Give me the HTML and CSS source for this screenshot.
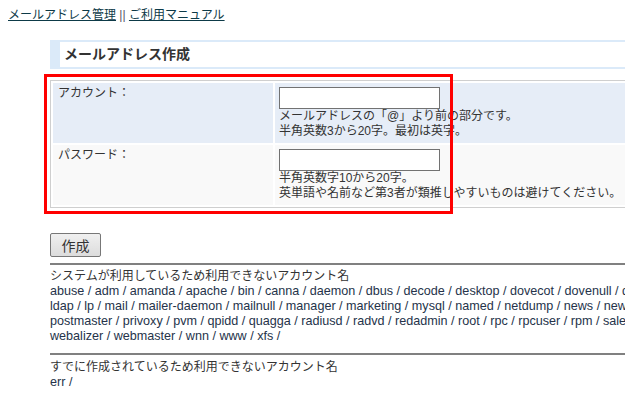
FILE: index.html
```html
<!DOCTYPE html>
<html lang="ja">
<head>
<meta charset="utf-8">
<title>メールアドレス作成</title>
<link rel="stylesheet" href="styles.css">
</head>
<body>
<div class="topnav"><a href="#">メールアドレス管理</a> <span class="sep">||</span> <a href="#">ご利用マニュアル</a></div>
<div class="main">
  <h2 class="title">メールアドレス作成</h2>
  <div class="formwrap">
    <table class="form">
      <tr class="row-a">
        <th>アカウント：</th>
        <td><input type="text" class="field"><div class="note">メールアドレスの「@」より前の部分です。<br>半角英数3から20字。最初は英字。</div></td>
      </tr>
      <tr class="row-b">
        <th>パスワード：</th>
        <td><input type="password" class="field"><div class="note">半角英数字10から20字。<br>英単語や名前など第3者が類推しやすいものは避けてください。</div></td>
      </tr>
    </table>
    <div class="highlight"></div>
  </div>
  <button class="submit" type="button">作成</button>
  <hr class="rule">
  <div class="block">
    <div>システムが利用しているため利用できないアカウント名</div>
    <div class="list">abuse / adm / amanda / apache / bin / canna / daemon / dbus / decode / desktop / dovecot / dovenull / dump /</div>
    <div class="list">ldap / lp / mail / mailer-daemon / mailnull / manager / marketing / mysql / named / netdump / news / newsletter /</div>
    <div class="list">postmaster / privoxy / pvm / qpidd / quagga / radiusd / radvd / redadmin / root / rpc / rpcuser / rpm / sales /</div>
    <div class="list">webalizer / webmaster / wnn / www / xfs /</div>
  </div>
  <hr class="rule rule2">
  <div class="block">
    <div>すでに作成されているため利用できないアカウント名</div>
    <div class="list">err /</div>
  </div>
</div>
</body>
</html>
```
FILE: styles.css
```css
html {
  overflow: hidden;
}
body {
  margin: 8px;
  font-family: "Liberation Sans", "Noto Sans CJK JP", sans-serif;
  font-size: 12px;
  line-height: 15px;
  color: #333;
  background: #fff;
}
.topnav {
  line-height: 15px;
  white-space: nowrap;
}
.topnav a {
  color: #0d3a48;
  text-decoration: underline;
}
.sep {
  color: #556;
}
.main {
  margin-left: 42px;
  width: 760px;
}
.title {
  margin: 17px 0 0;
  height: 25px;
  line-height: 25px;
  border-top: 2px solid #dbeaf9;
  border-bottom: 2px solid #dbeaf9;
  border-left: 10px solid #dbeaf9;
  padding-left: 4px;
  font-size: 14px;
  font-weight: bold;
  color: #333;
  background: #fff;
}
.formwrap {
  position: relative;
  margin-top: 11px;
}
.form {
  width: 100%;
  border: 1px solid #cfcfcf;
  border-spacing: 2px;
}
.form th,
.form td {
  padding: 4px;
  vertical-align: top;
  text-align: left;
  font-weight: normal;
}
.form th {
  width: 211px;
  padding-left: 5px;
  padding-top: 3px;
}
.row-a th,
.row-a td {
  background: #e6edf7;
}
.row-b th,
.row-b td {
  background: #f9f9f9;
}
.field {
  display: block;
  box-sizing: border-box;
  width: 161px;
  height: 22px;
  margin: 0;
  border: 1px solid #727272;
  background: #fff;
  padding: 0 3px;
}
.note {
  white-space: nowrap;
}
.highlight {
  position: absolute;
  left: -6px;
  top: -6px;
  width: 403px;
  height: 134px;
  border: 3px solid #ff0000;
}
.submit {
  display: block;
  margin-top: 25px;
  width: 51px;
  height: 24px;
  padding: 0;
  border: 1px solid #777;
  border-radius: 2px;
  background: linear-gradient(#f0f0f0, #dcdcdc);
  font-family: "Noto Sans CJK JP", sans-serif;
  font-size: 14px;
  color: #333;
}
.rule {
  margin: 6px 0 4px;
  height: 0;
  border: 0;
  border-top: 2px solid #808080;
}
.rule2 {
  margin-top: 9px;
  margin-bottom: 5px;
}
.block {
  white-space: nowrap;
}
.list {
  color: #25334a;
  font-size: 12.6px;
}
```
